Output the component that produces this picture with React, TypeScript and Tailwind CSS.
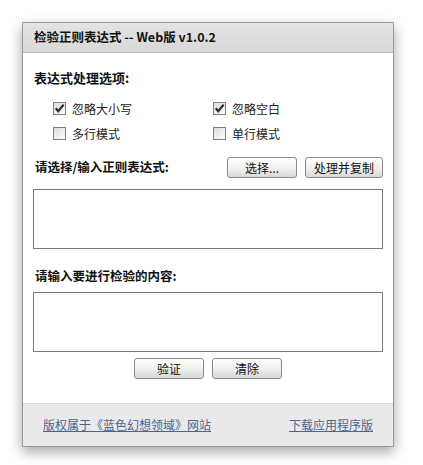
import React from "react";

const font = { fontFamily: '"Noto Sans CJK SC", "Liberation Sans", sans-serif' };

function Check({ checked, label }: { checked?: boolean; label: string }) {
  return (
    <label className="flex items-center h-[25px] text-[12px] text-[#222]">
      <span className="w-[13px] h-[13px] border border-[#7f7f7f] bg-gradient-to-br from-[#dcdcdc] to-white flex items-center justify-center shrink-0">
        {checked && (
          <svg width="11" height="11" viewBox="0 0 11 11">
            <path d="M1.8 5.2 L4.3 8.2 L9.6 1.6" fill="none" stroke="#2e2e2e" strokeWidth="2.2" />
          </svg>
        )}
      </span>
      <span className="ml-[6px]">{label}</span>
    </label>
  );
}

function Btn({ children, w }: { children: React.ReactNode; w: string }) {
  return (
    <button
      className={`${w} h-[21px] border border-[#8a8a8a] rounded-[3px] bg-gradient-to-b from-white via-[#f1f1f1] to-[#d9d9d9] text-[12px] text-[#111] leading-none`}
    >
      {children}
    </button>
  );
}

export default function App() {
  return (
    <div className="w-[423px] h-[465px] bg-white pt-[22px] pl-[22px]" style={font}>
      <div className="w-[372px] border border-[#9a9a9a] bg-white shadow-[0_5px_12px_rgba(0,0,0,0.35)]">
        <div className="h-[30px] bg-gradient-to-b from-[#e4e4e4] to-[#d8d8d8] border-b border-[#b4b4b4] flex items-center pl-[11px] text-[12.5px] font-bold text-[#111]">
          检验正则表达式 -- Web版 v1.0.2
        </div>
        <div className="px-[10px] pt-[17px] pb-[24px]">
          <div className="h-[16px] leading-[16px] text-[13px] font-bold text-[#111] pl-[1px]">表达式处理选项:</div>
          <div className="mt-[10px] ml-[20px] grid grid-cols-[160px_1fr]">
            <Check checked label="忽略大小写" />
            <Check checked label="忽略空白" />
            <Check label="多行模式" />
            <Check label="单行模式" />
          </div>
          <div className="mt-[11px] flex items-center h-[21px]">
            <div className="text-[12.5px] font-bold text-[#111] pl-[2px]">请选择/输入正则表达式:</div>
            <div className="ml-auto flex gap-[8px]">
              <Btn w="w-[70px]">选择...</Btn>
              <Btn w="w-[78px]">处理并复制</Btn>
            </div>
          </div>
          <textarea className="mt-[11px] block w-full h-[60px] border border-[#7a7a7a] resize-none outline-none" />
          <div className="mt-[19px] h-[16px] leading-[16px] text-[12.5px] font-bold text-[#111] pl-[2px]">请输入要进行检验的内容:</div>
          <textarea className="mt-[8px] block w-full h-[60px] border border-[#7a7a7a] resize-none outline-none" />
          <div className="mt-[6px] flex justify-center gap-[8px]">
            <Btn w="w-[70px]">验证</Btn>
            <Btn w="w-[70px]">清除</Btn>
          </div>
        </div>
        <div className="h-[43px] bg-[#e9e9e9] border-t border-[#d4d4d4] flex items-center justify-between px-[20px] text-[12px] text-[#4b6590]">
          <a className="underline">版权属于《蓝色幻想领域》网站</a>
          <a className="underline">下载应用程序版</a>
        </div>
      </div>
    </div>
  );
}
